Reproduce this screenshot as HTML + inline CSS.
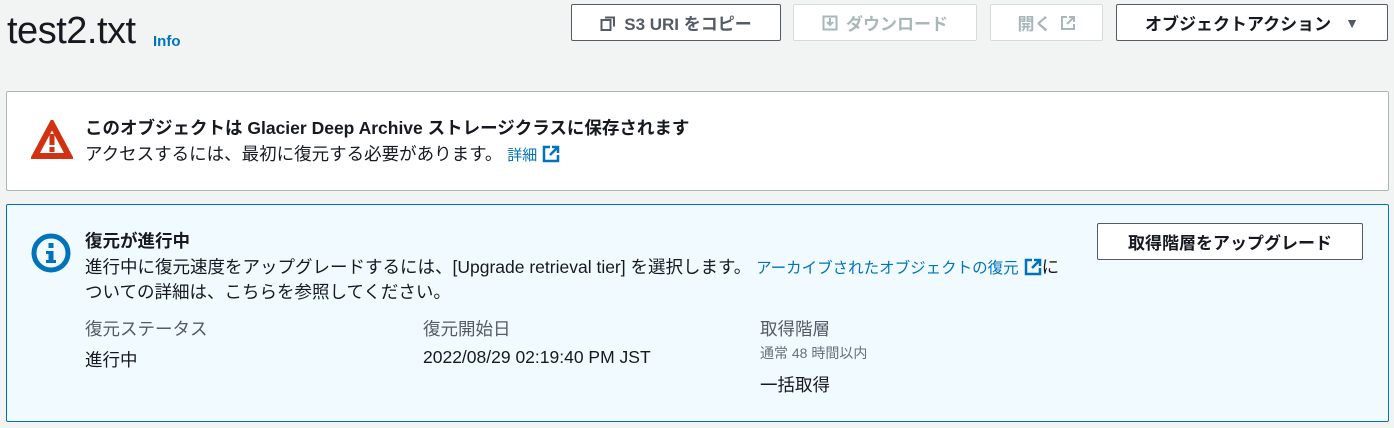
<!DOCTYPE html>
<html><head><meta charset="utf-8"><style>
*{box-sizing:border-box;margin:0;padding:0}
body{width:1394px;height:428px;background:#f2f3f3;font-family:"Liberation Sans","Noto Sans CJK JP",sans-serif;color:#16191f;position:relative;overflow:hidden}
.a{position:absolute;white-space:nowrap}
.btn{position:absolute;height:37px;border:1px solid #545b64;border-radius:2px;background:#fff;font-weight:bold;font-size:17px;color:#545b64;display:flex;align-items:center;justify-content:center;gap:8px}
.dis{border-color:#d5dbdb;color:#aab7b8}
.link{color:#0073bb}
.t{font-size:17.5px}
</style></head><body>
<div class="a" style="left:7px;top:10px;font-size:38px;color:#16191f;letter-spacing:-0.5px">test2.txt</div>
<div class="a link" style="left:153px;top:33px;font-size:15px;font-weight:bold">Info</div>

<div class="btn" style="left:571px;top:4px;width:210px"><svg width="16" height="16" viewBox="0 0 16 16"><rect x="1.5" y="5" width="9" height="10" fill="none" stroke="#545b64" stroke-width="2"/><path d="M5 2.5h9v9" fill="none" stroke="#545b64" stroke-width="2"/></svg>S3 URI をコピー</div>
<div class="btn dis" style="left:793px;top:4px;width:184px"><svg width="16" height="16" viewBox="0 0 16 16"><rect x="1.5" y="1.5" width="13" height="13" fill="none" stroke="#aab7b8" stroke-width="2"/><path d="M8 3v7M5 7l3 3 3-3" fill="none" stroke="#aab7b8" stroke-width="2"/></svg>ダウンロード</div>
<div class="btn dis" style="left:990px;top:4px;width:113px">開く <svg width="16" height="16" viewBox="0 0 16 16"><path d="M7 2H2v12h12V9M9 2h5v5M14 2L7 9" fill="none" stroke="#aab7b8" stroke-width="2"/></svg></div>
<div class="btn" style="left:1116px;top:4px;width:272px;color:#16191f;gap:14px">オブジェクトアクション <span style="font-size:14px;color:#545b64">▼</span></div>

<div class="a" style="left:6px;top:91px;width:1383px;height:100px;background:#fff;border:1px solid #aab7b8;border-radius:2px"></div>
<svg class="a" style="left:31px;top:120px" width="42" height="40" viewBox="0 0 42 40"><path d="M21 4L38 36H4Z" fill="none" stroke="#d13212" stroke-width="6" stroke-linejoin="miter"/><rect x="18.5" y="14" width="5" height="11" fill="#d13212"/><rect x="18.5" y="27" width="5" height="5" fill="#d13212"/></svg>
<div class="a t" style="left:85px;top:115px;font-weight:bold">このオブジェクトは Glacier Deep Archive ストレージクラスに保存されます</div>
<div class="a t" style="left:85px;top:141px">アクセスするには、最初に復元する必要があります。 <span class="link" style="font-size:15px">詳細</span> <svg width="18" height="18" viewBox="0 0 18 18" style="vertical-align:-3px"><path d="M8 2H2v14h14v-6M10 2h6v6M16 2L8 10" fill="none" stroke="#0073bb" stroke-width="2.5"/></svg></div>

<div class="a" style="left:6px;top:204px;width:1383px;height:218px;background:#f1faff;border:1px solid #0073bb;border-radius:2px"></div>
<svg class="a" style="left:31px;top:233px" width="40" height="40" viewBox="0 0 40 40"><circle cx="20" cy="20" r="17" fill="none" stroke="#0073bb" stroke-width="5"/><rect x="17.5" y="10" width="5" height="5" fill="#0073bb"/><path d="M15 18h7.5v9H25v3H15v-3h2.5v-6H15z" fill="#0073bb"/></svg>
<div class="a t" style="left:85px;top:228px;font-weight:bold">復元が進行中</div>
<div class="a t" style="left:85px;top:254px">進行中に復元速度をアップグレードするには、[Upgrade retrieval tier] を選択します。 <span class="link" style="font-size:15.5px">アーカイブされたオブジェクトの復元</span> <svg width="18" height="18" viewBox="0 0 18 18" style="vertical-align:-3px"><path d="M8 2H2v14h14v-6M10 2h6v6M16 2L8 10" fill="none" stroke="#0073bb" stroke-width="2.5"/></svg>に</div>
<div class="a t" style="left:85px;top:279px">ついての詳細は、こちらを参照してください。</div>
<div class="btn" style="left:1097px;top:223px;width:266px;color:#16191f">取得階層をアップグレード</div>

<div class="a t" style="left:85px;top:316px;color:#545b64">復元ステータス</div>
<div class="a t" style="left:85px;top:347px">進行中</div>
<div class="a t" style="left:423px;top:316px;color:#545b64">復元開始日</div>
<div class="a t" style="left:423px;top:347px">2022/08/29 02:19:40 PM JST</div>
<div class="a t" style="left:760px;top:316px;color:#545b64">取得階層</div>
<div class="a" style="left:760px;top:343px;font-size:14px;color:#687078">通常 48 時間以内</div>
<div class="a t" style="left:760px;top:372px">一括取得</div>
</body></html>
